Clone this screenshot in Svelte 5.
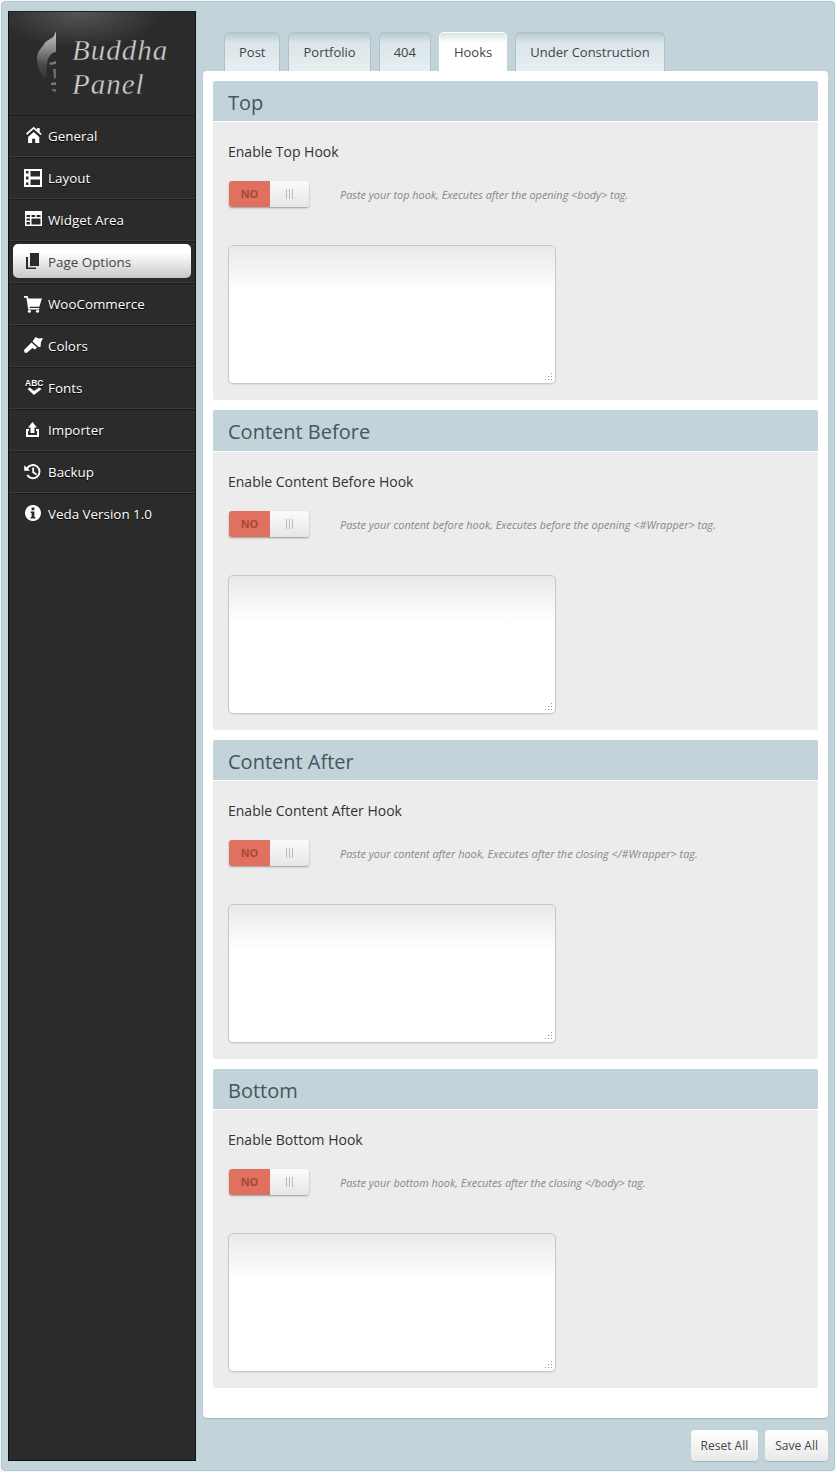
<script>
	const menu = [
		{ name: 'General', icon: 'home' },
		{ name: 'Layout', icon: 'layout' },
		{ name: 'Widget Area', icon: 'widget' },
		{ name: 'Page Options', icon: 'pages', active: true },
		{ name: 'WooCommerce', icon: 'cart' },
		{ name: 'Colors', icon: 'brush' },
		{ name: 'Fonts', icon: 'fonts' },
		{ name: 'Importer', icon: 'upload' },
		{ name: 'Backup', icon: 'history' },
		{ name: 'Veda Version 1.0', icon: 'info' }
	];

	const tabs = [
		{ name: 'Post' },
		{ name: 'Portfolio' },
		{ name: '404' },
		{ name: 'Hooks', active: true },
		{ name: 'Under Construction' }
	];

	const sections = [
		{ title: 'Top', label: 'Enable Top Hook', desc: 'Paste your top hook, Executes after the opening <body> tag.' },
		{ title: 'Content Before', label: 'Enable Content Before Hook', desc: 'Paste your content before hook, Executes before the opening <#Wrapper> tag.' },
		{ title: 'Content After', label: 'Enable Content After Hook', desc: 'Paste your content after hook, Executes after the closing </#Wrapper> tag.' },
		{ title: 'Bottom', label: 'Enable Bottom Hook', desc: 'Paste your bottom hook, Executes after the closing </body> tag.' }
	];
</script>

<div class="frame">
	<aside class="sidebar">
		<div class="logo">
			<svg class="face" width="24" height="66" viewBox="0 0 24 66">
				<defs>
					<linearGradient id="faceFill" x1="0" y1="0" x2="0" y2="1">
						<stop offset="0" stop-color="#c9c9c9" />
						<stop offset="0.35" stop-color="#8f8f8f" />
						<stop offset="0.7" stop-color="#4a4a4a" />
						<stop offset="1" stop-color="#333" />
					</linearGradient>
				</defs>
				<path fill="url(#faceFill)" d="M20 0 L20 21 C14 22 12 27 11 33 C10 40 12 46 9 48 C5 44 1 36 1 27 C1 20 6 17 8 13 C10 9 16 8 18 5 Z" />
				<path fill="#777" d="M13 32 L20 30 L20 33 L14 34 Z" />
				<path fill="#6a6a6a" d="M17 38 L20 38 L20 47 L18 48 Z" />
				<path fill="#777" d="M15 52 L20 51 L20 54 L15 54 Z" />
				<path fill="#666" d="M16 58 L20 58 L20 61 L16 60 Z" />
			</svg>
			<div class="logo-text">Buddha<br />Panel</div>
		</div>
		<nav>
			{#each menu as item}
				<a class="nav-row" class:active={item.active} href="#top">
					<span class="nav-item">
						<svg class="icon" width="22" height="20" viewBox="0 0 22 20" fill="currentColor">
							{#if item.icon === 'home'}
								<g transform="translate(1.2 1.6) scale(0.86)">
									<path d="M11 1.5 L3.5 8.3 L2 6.8 L11 -1 L15 2.5 L15 0.5 L18 0.5 L18 5.1 L20.5 7.3 L19 8.7 Z" />
									<path d="M4.5 11 L11 5.2 L17.5 11 L17.5 18 L12.8 18 L12.8 13 L9.2 13 L9.2 18 L4.5 18 Z" />
								</g>
							{:else if item.icon === 'layout'}
								<path fill-rule="evenodd" d="M1 1 H19 V19 H1 Z M3 3 V5.5 H5.5 V3 Z M7.5 3 V8.5 H17 V3 Z M3 8.5 V11.5 H5.5 V8.5 Z M7.5 11.5 V17 H17 V11.5 Z M3 14.5 V17 H5.5 V14.5 Z" />
							{:else if item.icon === 'widget'}
								<path fill-rule="evenodd" d="M2 1 H19 V16 H2 Z M3.5 5 V7 H7 V5 Z M8.5 5 V7 H12 V5 Z M13.5 5 V7 H17.5 V5 Z M3.5 8.5 V10.5 H7 V8.5 Z M8.5 8.5 V14.5 H17.5 V8.5 Z M3.5 12 V14.5 H7 V12 Z" />
							{:else if item.icon === 'pages'}
								<path d="M7 1 H16 V14 H7 Z" />
								<path d="M3 5 H5 V15.5 H13 V17 H3 Z" />
							{:else if item.icon === 'cart'}
								<g transform="translate(1 1) scale(0.9)">
									<path d="M0 1 H4 L5 4 H20 L17 13 H6 L6.4 14.5 H17 V16 H4.6 L2.8 3 H0 Z" />
									<circle cx="6" cy="18" r="1.7" />
									<circle cx="15" cy="18" r="1.7" />
								</g>
							{:else if item.icon === 'brush'}
								<path d="M9.5 5.5 L12.5 1 L15.5 2.5 L20 2 L18 6 L17.5 11 L15.5 11 Z" />
								<path d="M8.5 6.5 L14 11.5 L12 13.5 L9.5 12 L3.5 17 L1.5 16.5 L1 14 L6.5 8.5 Z" />
							{:else if item.icon === 'fonts'}
								<text x="2" y="8" font-size="8.5" font-weight="700" font-family="'Liberation Sans', sans-serif">ABC</text>
								<path d="M4.5 11 L6.8 9.4 L11 13 L16.2 9.4 L18.5 11 L11 17 Z" />
							{:else if item.icon === 'upload'}
								<path d="M9.5 2 L14 7.5 H11.5 V13 H7.5 V7.5 H5 Z" />
								<path d="M3 9 H6 V11 H5 V15 H14 V11 H13 V9 H16 V17 H3 Z" />
							{:else if item.icon === 'history'}
								<g transform="translate(0.5 1.2) scale(0.88)">
									<path fill-rule="evenodd" d="M3.4 5 A8.6 8.6 0 1 1 3.3 14 L5.2 12.8 A6.4 6.4 0 1 0 5.2 6.4 L7.3 8.5 H0.8 V2.2 Z" />
									<path d="M10 5 H12 V9.8 L15.5 12.3 L14.3 13.8 L10 10.8 Z" />
								</g>
							{:else}
								<path fill-rule="evenodd" d="M10 1 A8 8 0 1 1 9.99 1 Z M8.6 3.4 V6.2 H11.4 V3.4 Z M7.6 7.6 V9 H8.6 V13 H7.6 V14.4 H12.4 V13 H11.4 V7.6 Z" />
							{/if}
						</svg>
						<span>{item.name}</span>
					</span>
				</a>
			{/each}
		</nav>
	</aside>

	<main>
		<div class="tabs">
			{#each tabs as tab}
				<button class="tab" class:active={tab.active}>{tab.name}</button>
			{/each}
		</div>

		<div class="panel">
			{#each sections as section}
				<section>
					<h2>{section.title}</h2>
					<div class="body">
						<h3>{section.label}</h3>
						<div class="switch-row">
							<div class="switch">
								<span class="no">NO</span>
								<span class="knob"><i></i><i></i><i></i></span>
							</div>
							<p>{section.desc}</p>
						</div>
						<div class="area">
							<textarea></textarea>
							<svg class="grip" width="9" height="9" viewBox="0 0 9 9" fill="#999">
								<rect x="6" y="0" width="1" height="1" />
								<rect x="3" y="3" width="1" height="1" />
								<rect x="6" y="3" width="1" height="1" />
								<rect x="0" y="6" width="1" height="1" />
								<rect x="3" y="6" width="1" height="1" />
								<rect x="6" y="6" width="1" height="1" />
							</svg>
						</div>
					</div>
				</section>
			{/each}
		</div>

		<div class="actions">
			<button>Reset All</button>
			<button>Save All</button>
		</div>
	</main>
</div>

<style>
	:global(body) {
		background: #f4f7f8;
		font-family: "Open Sans", sans-serif;
	}

	.frame {
		box-sizing: border-box;
		height: 1470px;
		margin: 1px 1px 1px 1px;
		border: 1px solid #b4c7cd;
		border-radius: 4px;
		background: #c2d4da;
		display: flex;
		align-items: flex-start;
		padding: 9px 6px 0 6px;
	}

	/* sidebar */
	.sidebar {
		box-sizing: border-box;
		flex: none;
		width: 188px;
		height: 1450px;
		background: #2b2b2b;
		border: 1px solid #111;
		border-top-color: #222;
	}

	.logo {
		height: 103px;
		display: flex;
		align-items: flex-start;
		padding: 19px 0 0 27px;
		box-sizing: border-box;
		background: radial-gradient(ellipse 85px 36px at 70px 0, #555, #2b2b2b);
	}

	.logo-text {
		margin-left: 12px;
		margin-top: 2px;
		font-family: "Liberation Serif", serif;
		font-style: italic;
		font-size: 29px;
		line-height: 34px;
		letter-spacing: 1px;
		color: #d0d0d0;
		-webkit-text-stroke: 0.35px #2b2b2b;
	}

	.nav-row {
		display: block;
		box-sizing: border-box;
		height: 42px;
		border-top: 1px solid #1d1d1d;
		border-bottom: 1px solid #3b3b3b;
		padding: 3px 4px;
		text-decoration: none;
		color: #fff;
		font-size: 13.4px;
	}

	.nav-row:last-child {
		border-bottom: 0;
	}

	.nav-item {
		box-sizing: border-box;
		display: flex;
		align-items: center;
		height: 34px;
		padding-left: 10px;
		border-radius: 5px;
		text-shadow: 0 1px 1px #000;
	}

	.nav-item span {
		margin-left: 3px;
	}

	.icon {
		flex: none;
	}

	.nav-row.active {
		color: #444;
		padding-top: 2px;
	}

	.nav-row.active .nav-item {
		padding-top: 2px;
		background: linear-gradient(#fff, #fff 25%, #c8c8c8);
		text-shadow: none;
	}

	.nav-row.active .icon {
		color: #2b2b2b;
	}

	/* main column */
	main {
		flex: 1;
		margin-left: 7px;
	}

	.tabs {
		display: flex;
		gap: 8px;
		padding: 21px 0 0 21px;
	}

	.tab {
		box-sizing: border-box;
		height: 39px;
		padding: 0 14px;
		font: 13px "Open Sans", sans-serif;
		color: #444;
		border: 1px solid #aec2c9;
		border-bottom: 0;
		border-radius: 5px 5px 0 0;
		background: linear-gradient(#b6c9cf, #dbe6ea 10px, #e6eef0);
	}

	.tab.active {
		background: linear-gradient(#d8e3e6, #fff 10px);
		border-color: #fff;
	}

	.panel {
		background: #fff;
		border-radius: 4px;
		padding: 10px 10px 30px;
		box-shadow: 0 1px 1px #9fb4bb;
	}

	section {
		height: 319.33px;
		display: flex;
		flex-direction: column;
	}

	section + section {
		margin-top: 10px;
	}

	h2 {
		flex: none;
		margin: 0 0 1px;
		height: 40.4px;
		padding-left: 15px;
		background: #c2d4da;
		border-radius: 2px 2px 0 0;
		font-size: 20px;
		font-weight: 400;
		line-height: 44px;
		color: #45565d;
	}

	.body {
		flex: 1;
		background: #ececec;
		border-radius: 0 0 2px 2px;
		padding: 20px 15px 0;
	}

	h3 {
		margin: 0;
		font-size: 14px;
		font-weight: 400;
		line-height: 20px;
		color: #333;
	}

	.switch-row {
		display: flex;
		align-items: center;
		margin-top: 19px;
		padding-left: 1px;
	}

	.switch {
		flex: none;
		display: flex;
		width: 80px;
		height: 26px;
		box-sizing: border-box;
		border-radius: 3px;
		box-shadow: 0 1px 2px #999;
		overflow: hidden;
	}

	.no {
		width: 41px;
		background: #e0705f;
		color: #a8483b;
		font-size: 11px;
		font-weight: 700;
		line-height: 26px;
		text-align: center;
	}

	.knob {
		flex: 1;
		display: flex;
		justify-content: center;
		align-items: center;
		gap: 2px;
		background: linear-gradient(#fbfbfb, #e6e6e6);
	}

	.knob i {
		width: 1px;
		height: 10px;
		background: #bbb;
	}

	.switch-row p {
		margin: 1px 0 0 31px;
		font-size: 10.9px;
		font-style: italic;
		color: #888;
	}

	.area {
		position: relative;
		margin-top: 38px;
		width: 328px;
		height: 139px;
	}

	textarea {
		display: block;
		box-sizing: border-box;
		width: 100%;
		height: 100%;
		resize: none;
		border: 1px solid #c8c8c8;
		border-radius: 5px;
		background: linear-gradient(#e9e9e9, #fff 45px);
		box-shadow: 0 1px 1px #ddd;
	}

	.grip {
		position: absolute;
		right: 2px;
		bottom: 2px;
	}

	.actions {
		display: flex;
		justify-content: flex-end;
		gap: 7px;
		margin-top: 12px;
	}

	.actions button {
		box-sizing: border-box;
		height: 31px;
		padding: 0 10px;
		border: 0;
		border-radius: 4px;
		background: linear-gradient(#fff, #e9e9e9);
		box-shadow: 0 1px 1px #9fb4bb;
		font: 12px "Open Sans", sans-serif;
		color: #444;
	}
</style>
